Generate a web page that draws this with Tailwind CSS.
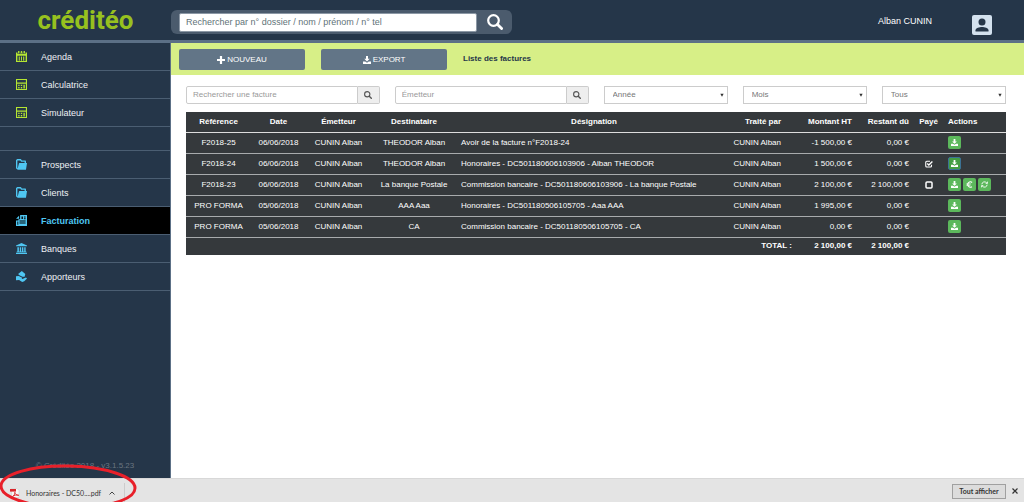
<!DOCTYPE html>
<html lang="fr">
<head>
<meta charset="utf-8">
<meta name="viewport" content="width=device-width, initial-scale=1">
<title>Créditéo - Liste des factures</title>
<script src="https://cdn.jsdelivr.net/npm/@tailwindcss/browser@4"></script>
</head>
<body class="relative flex min-h-screen flex-col overflow-x-hidden bg-white font-['Liberation_Sans',Arial,sans-serif] text-[8px] leading-3 text-[#333]">

<!-- Shared icon shapes -->
<svg class="hidden" aria-hidden="true">
  <symbol id="i-search" viewBox="0 0 16 16"><circle cx="6.5" cy="6.5" r="5.300" fill="none" stroke="currentColor" stroke-width="2.200"/><path d="M10.500 10.500 14.600 14.600" stroke="currentColor" stroke-width="2.800" stroke-linecap="round"/></symbol>
  <symbol id="i-save" viewBox="0 0 16 16"><path fill="currentColor" d="M6 0h4v5.500h3.500L8 11 2.500 5.500H6zM0 10.800h4.500L8 13.300l3.500-2.500H16V16H0z"/></symbol>
  <symbol id="i-calendar" viewBox="0 0 16 16"><path fill="currentColor" d="M3 0h2v3.500H3zM7 0h2v3.500H7zM11 0h2v3.500h-2zM0 2h2.200v2.500h3.600V2h.5v2.500h3.400V2h.6v2.500h3.500V2H16v14H0zM2 7v7.400h12V7z"/><path fill="currentColor" d="M4 8h1.500v6H4zM7.200 8h1.500v6H7.200zM10.400 8H12v6h-1.600z"/></symbol>
  <symbol id="i-calc" viewBox="0 0 16 16"><path fill="none" stroke="currentColor" stroke-width="1.600" d="M.8.8h14.400v14.400H.8zM.8 6h14.400"/><path fill="currentColor" d="M3.200 8.200h2v2h-2zM7 8.200h2v2H7zM3.200 11.800h2v2h-2zM7 11.800h2v2H7zM10.800 8.200h2v5.600h-2z"/></symbol>
  <symbol id="i-folder" viewBox="0 0 16 16"><path fill="none" stroke="currentColor" stroke-width="2" stroke-linejoin="round" d="M2.500 14.500 1 13V2L2 1h4.500l1.500 2h5.500v3"/><path fill="currentColor" d="M4.500 5.800H16L14.500 15.500H2z"/></symbol>
  <symbol id="i-bill" viewBox="0 0 16 16"><path fill="currentColor" fill-rule="evenodd" d="M6 0h10v16H0V8h3.500V6H6zM8 2v3.800h2V2zM11.500 2v1.500H14V2zM11.500 4.800v1.500H14V4.800zM5 8v1.400h9V8zM5 10.800v1.400h9v-1.400zM2 9.500v4.500h1.300V9.500zM0 5.500 4.500 1v4.500z"/></symbol>
  <symbol id="i-bank" viewBox="0 0 16 16"><path fill="currentColor" d="M8 0 16 3.500v1.300H0V3.500zM2 6h2.200v6.500h1.300V6h2v6.500h1.200V6h2v6.500H12V6h2v6.500h1v1H1v-1h1zM0 14.300h16V16H0z"/></symbol>
  <symbol id="i-hand" viewBox="0 0 16 16"><path fill="currentColor" d="M8.500 0 13.500 4.500 12.500 8.200H9.500L5 6.300 3 4.500zM0 7.500l4-.3 5 2.500-.3 1.400-3.200-.3 3.800 1L14.500 9.500 16 11 12 15l-3 1L4.500 13.200 0 13.500z"/></symbol>
  <symbol id="i-euro" viewBox="0 0 16 16"><path fill="none" stroke="currentColor" stroke-width="2.500" d="M14 3.500A6 6 0 1 0 13.500 13"/><path stroke="currentColor" stroke-width="1.800" d="M1 6.700h10M1 9.700h9"/></symbol>
  <symbol id="i-refresh" viewBox="0 0 16 16"><path fill="none" stroke="currentColor" stroke-width="2" d="M2 7.500A6 6 0 0 1 12.500 4M14 8.500A6 6 0 0 1 3.500 12"/><path fill="currentColor" d="M15.500.8V6.500H9.800zM.5 15.200V9.500h5.700z"/></symbol>
  <symbol id="i-checked" viewBox="0 0 16 16"><path fill="none" stroke="currentColor" stroke-width="2.200" d="M13 9.500V12a2 2 0 0 1-2 2H3.500a2 2 0 0 1-2-2V4.500a2 2 0 0 1 2-2H10"/><path fill="none" stroke="currentColor" stroke-width="2.800" d="m4.500 6.800 3.200 3.200L14.800 3"/></symbol>
  <symbol id="i-unchecked" viewBox="0 0 16 16"><rect x="2" y="2" width="12" height="12" rx="2" fill="none" stroke="currentColor" stroke-width="3"/></symbol>
  <symbol id="i-arrow" viewBox="0 0 6 6"><path fill="currentColor" d="M.5 1h5L3 5.500z"/></symbol>
</svg>

<header class="flex h-[43px] items-center border-b-3 border-[#5c7086] bg-[#253649]">
  <a href="#" class="w-[171px] text-center font-[Roboto,sans-serif] text-[26px] leading-8 font-bold text-[#97c11f]">créditéo</a>
  <form class="mt-1 flex h-6 w-[341px] items-center rounded-md bg-[#4b5b6d] pl-2" role="search">
    <input type="text" aria-label="Rechercher un dossier" placeholder="Rechercher par n° dossier / nom / prénom / n° tel" class="h-[19px] w-[298px] rounded-xs border border-[#8c98a5] bg-white px-1.5 text-[9px] placeholder:text-[#5f7378]">
    <button type="button" aria-label="Rechercher" class="flex flex-1 justify-center text-white"><svg class="size-4"><use href="#i-search"/></svg></button>
  </form>
  <span class="mt-0.5 ml-auto text-[9px] text-white">Alban CUNIN</span>
  <a href="#" aria-label="Mon compte" class="mt-2.5 mr-8 ml-10"><svg class="size-5" viewBox="0 0 20 20"><rect width="20" height="20" rx="2" fill="#d3e1ee"/><circle cx="10" cy="7" r="3.500" fill="#253649"/><path fill="#253649" d="M3.500 16.500v-1.300C3.500 13 7.500 12 10 12s6.500 1 6.500 3.200v1.300z"/></svg></a>
</header>

<div class="flex flex-1">
  <nav class="flex w-[171px] shrink-0 flex-col border-r border-[#5c7086] bg-[#253649] text-[9px] text-[#eef1f4]">
    <a href="#" class="flex h-7 items-center gap-3.5 border-b border-[#4b5e72] pl-4"><svg class="size-[11px] text-[#b5e632]"><use href="#i-calendar"/></svg>Agenda</a>
    <a href="#" class="flex h-7 items-center gap-3.5 border-b border-[#4b5e72] pl-4"><svg class="size-[11px] text-[#b5e632]"><use href="#i-calc"/></svg>Calculatrice</a>
    <a href="#" class="flex h-7 items-center gap-3.5 border-b border-[#4b5e72] pl-4"><svg class="size-[11px] text-[#b5e632]"><use href="#i-calc"/></svg>Simulateur</a>
    <div class="h-6 border-b border-[#4b5e72]"></div>
    <a href="#" class="flex h-7 items-center gap-3.5 border-b border-[#4b5e72] pl-4"><svg class="size-[11px] text-[#4fc7f3]"><use href="#i-folder"/></svg>Prospects</a>
    <a href="#" class="flex h-7 items-center gap-3.5 border-b border-[#4b5e72] pl-4"><svg class="size-[11px] text-[#4fc7f3]"><use href="#i-folder"/></svg>Clients</a>
    <a href="#" aria-current="page" class="flex h-7 items-center gap-3.5 border-b border-[#4b5e72] bg-black pl-4 font-bold text-[#4fc7f3]"><svg class="size-[11px]"><use href="#i-bill"/></svg>Facturation</a>
    <a href="#" class="flex h-7 items-center gap-3.5 border-b border-[#4b5e72] pl-4"><svg class="size-[11px] text-[#4fc7f3]"><use href="#i-bank"/></svg>Banques</a>
    <a href="#" class="flex h-7 items-center gap-3.5 border-b border-[#4b5e72] pl-4"><svg class="size-[11px] text-[#4fc7f3]"><use href="#i-hand"/></svg>Apporteurs</a>
    <p class="mt-auto pb-1.5 text-center text-[8px] text-[#6a7580]">© Créditéo 2018 - v3.1.5.23</p>
  </nav>

  <main class="min-w-0 flex-1">
    <div class="flex h-8 items-center gap-4 bg-[#d7ef87] pl-2">
      <button type="button" class="flex h-[21px] w-[126px] items-center justify-center gap-0.5 rounded-xs bg-[#627587] pt-px text-white"><svg class="size-2" viewBox="0 0 8 8"><path stroke="currentColor" stroke-width="2.200" d="M4 0v8M0 4h8"/></svg>NOUVEAU</button>
      <button type="button" class="flex h-[21px] w-[126px] items-center justify-center gap-0.5 rounded-xs bg-[#627587] pt-px text-white"><svg class="size-2"><use href="#i-save"/></svg>EXPORT</button>
      <h1 class="font-bold text-[#253649]">Liste des factures</h1>
    </div>

    <div class="pt-[11px] pr-[18px] pl-[15px]">
      <form class="grid grid-cols-12 gap-[15px] text-[#777]">
        <div class="col-span-3 flex h-[18px]">
          <input type="text" aria-label="Rechercher une facture" placeholder="Rechercher une facture" class="min-w-0 flex-1 rounded-l-xs border border-[#ccc] bg-white px-1.5 placeholder:text-[#999]">
          <button type="button" aria-label="Rechercher" class="flex w-[22px] items-center justify-center rounded-r-xs border border-l-0 border-[#ccc] bg-[#eee] text-[#555]"><svg class="size-2"><use href="#i-search"/></svg></button>
        </div>
        <div class="col-span-3 flex h-[18px]">
          <input type="text" aria-label="Émetteur" placeholder="Émetteur" class="min-w-0 flex-1 rounded-l-xs border border-[#ccc] bg-white px-1.5 placeholder:text-[#999]">
          <button type="button" aria-label="Rechercher un émetteur" class="flex w-[22px] items-center justify-center rounded-r-xs border border-l-0 border-[#ccc] bg-[#eee] text-[#555]"><svg class="size-2"><use href="#i-search"/></svg></button>
        </div>
        <div class="relative col-span-2 h-[18px]">
          <select aria-label="Année" class="h-full w-full appearance-none border border-[#ccc] bg-white px-2"><option>Année</option></select>
          <svg class="pointer-events-none absolute top-[7px] right-1 size-1 text-[#333]"><use href="#i-arrow"/></svg>
        </div>
        <div class="relative col-span-2 h-[18px]">
          <select aria-label="Mois" class="h-full w-full appearance-none border border-[#ccc] bg-white px-2"><option>Mois</option></select>
          <svg class="pointer-events-none absolute top-[7px] right-1 size-1 text-[#333]"><use href="#i-arrow"/></svg>
        </div>
        <div class="relative col-span-2 h-[18px]">
          <select aria-label="État" class="h-full w-full appearance-none border border-[#ccc] bg-white px-2"><option>Tous</option></select>
          <svg class="pointer-events-none absolute top-[7px] right-1 size-1 text-[#333]"><use href="#i-arrow"/></svg>
        </div>
      </form>

      <table class="mt-2 w-full table-fixed border-collapse bg-[#35393c] text-center text-white">
        <colgroup><col class="w-[65px]"><col class="w-[55px]"><col class="w-[65px]"><col class="w-[86px]"><col><col class="w-[65px]"><col class="w-[60px]"><col class="w-[57px]"><col class="w-[31px]"><col class="w-[62px]"></colgroup>
        <thead>
          <tr class="h-5 border-b border-[#ddd]"><th>Référence</th><th>Date</th><th>Émetteur</th><th>Destinataire</th><th>Désignation</th><th class="pr-[15px] text-right">Traité par</th><th class="pr-1 text-right">Montant HT</th><th class="pr-1 text-right">Restant dû</th><th>Payé</th><th class="pl-1 text-left">Actions</th></tr>
        </thead>
        <tbody class="whitespace-nowrap">
          <tr class="h-[21px] border-b border-[#a8abad]"><td>F2018-25</td><td>06/06/2018</td><td>CUNIN Alban</td><td>THEODOR Alban</td><td class="pl-1 text-left">Avoir de la facture n°F2018-24</td><td class="pr-[15px] text-right">CUNIN Alban</td><td class="pr-1 text-right">-1 500,00 €</td><td class="pr-1 text-right">0,00 €</td><td></td>
            <td class="pl-1"><div class="flex gap-0.5"><button type="button" aria-label="Télécharger" class="flex size-[13px] items-center justify-center rounded-xs bg-[#5cb85c]"><svg class="size-[7px]"><use href="#i-save"/></svg></button></div></td></tr>
          <tr class="h-[21px] border-b border-[#a8abad]"><td>F2018-24</td><td>06/06/2018</td><td>CUNIN Alban</td><td>THEODOR Alban</td><td class="pl-1 text-left">Honoraires - DC501180606103906 - Alban THEODOR</td><td class="pr-[15px] text-right">CUNIN Alban</td><td class="pr-1 text-right">1 500,00 €</td><td class="pr-1 text-right">0,00 €</td><td><svg class="mx-auto size-2" role="img" aria-label="Payé"><use href="#i-checked"/></svg></td>
            <td class="pl-1"><div class="flex gap-0.5"><button type="button" aria-label="Télécharger" class="flex size-[13px] items-center justify-center rounded-xs border border-[#3b7295] bg-[#449d44]"><svg class="size-[7px]"><use href="#i-save"/></svg></button></div></td></tr>
          <tr class="h-[21px] border-b border-[#a8abad]"><td>F2018-23</td><td>06/06/2018</td><td>CUNIN Alban</td><td>La banque Postale</td><td class="pl-1 text-left">Commission bancaire - DC501180606103906 - La banque Postale</td><td class="pr-[15px] text-right">CUNIN Alban</td><td class="pr-1 text-right">2 100,00 €</td><td class="pr-1 text-right">2 100,00 €</td><td><svg class="mx-auto size-2" role="img" aria-label="Non payé"><use href="#i-unchecked"/></svg></td>
            <td class="pl-1"><div class="flex gap-0.5"><button type="button" aria-label="Télécharger" class="flex size-[13px] items-center justify-center rounded-xs bg-[#5cb85c]"><svg class="size-[7px]"><use href="#i-save"/></svg></button><button type="button" aria-label="Encaisser" class="flex size-[13px] items-center justify-center rounded-xs bg-[#5cb85c]"><svg class="size-[7px]"><use href="#i-euro"/></svg></button><button type="button" aria-label="Actualiser" class="flex size-[13px] items-center justify-center rounded-xs bg-[#5cb85c]"><svg class="size-[7px]"><use href="#i-refresh"/></svg></button></div></td></tr>
          <tr class="h-[21px] border-b border-[#a8abad]"><td>PRO FORMA</td><td>05/06/2018</td><td>CUNIN Alban</td><td>AAA Aaa</td><td class="pl-1 text-left">Honoraires - DC501180506105705 - Aaa AAA</td><td class="pr-[15px] text-right">CUNIN Alban</td><td class="pr-1 text-right">1 995,00 €</td><td class="pr-1 text-right">0,00 €</td><td></td>
            <td class="pl-1"><div class="flex gap-0.5"><button type="button" aria-label="Télécharger" class="flex size-[13px] items-center justify-center rounded-xs bg-[#5cb85c]"><svg class="size-[7px]"><use href="#i-save"/></svg></button></div></td></tr>
          <tr class="h-[21px] border-b border-[#a8abad]"><td>PRO FORMA</td><td>05/06/2018</td><td>CUNIN Alban</td><td>CA</td><td class="pl-1 text-left">Commission bancaire - DC501180506105705 - CA</td><td class="pr-[15px] text-right">CUNIN Alban</td><td class="pr-1 text-right">0,00 €</td><td class="pr-1 text-right">0,00 €</td><td></td>
            <td class="pl-1"><div class="flex gap-0.5"><button type="button" aria-label="Télécharger" class="flex size-[13px] items-center justify-center rounded-xs bg-[#5cb85c]"><svg class="size-[7px]"><use href="#i-save"/></svg></button></div></td></tr>
        </tbody>
        <tfoot>
          <tr class="h-[18px] text-right font-bold"><td colspan="6" class="pr-1">TOTAL :</td><td class="pr-1">2 100,00 €</td><td class="pr-1">2 100,00 €</td><td></td><td></td></tr>
        </tfoot>
      </table>
    </div>
  </main>
</div>

<!-- Browser download shelf -->
<footer class="relative flex h-6 items-center border-t border-[#d8d8d8] bg-[#e4e4e4] pr-1.5 pl-2.5 font-[Lato,sans-serif] text-[7px] text-[#333]">
  <a href="#" class="mt-1 flex items-center"><svg class="mr-1.5 size-2.5" viewBox="0 0 10 10"><path fill="#f8f8f8" stroke="#c9c9c9" stroke-width=".5" d="M1.500.5h5.500l2 2v7h-7.500z"/><path fill="#d9252a" d="M0 1h6v2.600H0z"/><path fill="none" stroke="#d9252a" stroke-width=".9" d="M2.500 8.500C5 7 5 5 4.800 4.300c.4 2 2 3 4 3C6.500 6.500 4 7.300 2.500 8.500z"/></svg>Honoraires - DC50....pdf</a>
  <button type="button" aria-label="Options du fichier" class="mt-1 ml-2 flex h-5 w-4 items-center border-r border-[#ccc]"><svg class="size-1.5" viewBox="0 0 6 6"><path fill="none" stroke="#444" d="M.5 4.500 3 2l2.500 2.500"/></svg></button>
  <button type="button" class="mt-px ml-auto h-[15px] w-[54px] border border-[#a0a0a0] bg-[#dcdcdc] leading-3 font-bold whitespace-nowrap">Tout afficher</button>
  <button type="button" aria-label="Fermer" class="mt-px ml-1.5"><svg class="size-1.5" viewBox="0 0 6 6"><path stroke="#333" stroke-width="1.200" d="m.5.5 5 5m0-5-5 5"/></svg></button>
  <div class="pointer-events-none absolute bottom-0 left-0 h-10 w-[140px] overflow-hidden"><svg class="h-10 w-[140px]" viewBox="0 0 140 40"><ellipse cx="68" cy="25" rx="67" ry="21" fill="none" stroke="#e8202a" stroke-width="3" transform="rotate(1 68 25)"/></svg></div>
</footer>
</body>
</html>
